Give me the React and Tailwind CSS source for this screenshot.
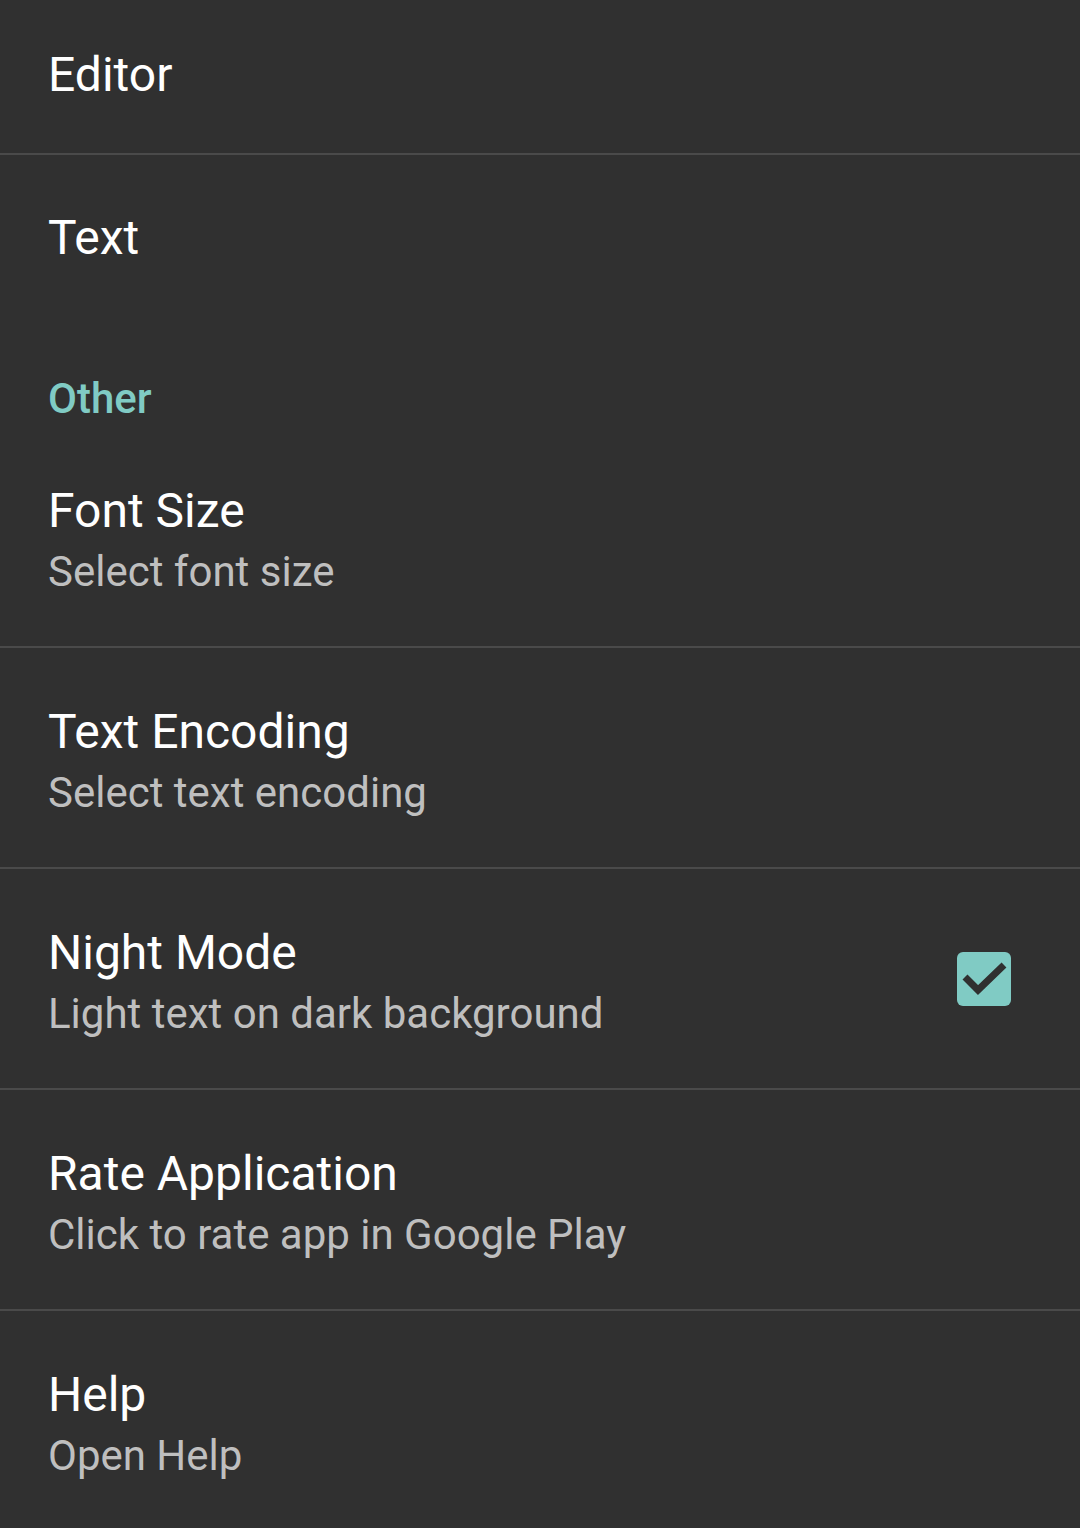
import React from 'react';

const font = { fontFamily: 'Roboto, "Noto Sans", sans-serif' };

function Divider() {
  return <div className="h-[2px] bg-[#4a4a4a]" />;
}

function PrefItem({ title, summary, checked }) {
  return (
    <div className="h-[219px] flex items-start pl-12 pr-[69px] pt-[56px]">
      <div className="flex-1 min-w-0">
        <div className="text-[48px] leading-[56px] text-white">{title}</div>
        <div className="mt-2 text-[42px] leading-[50px] text-[#bfbfbf]">{summary}</div>
      </div>
      {checked !== undefined ? (
        <div className="self-center -mt-[56px] w-[54px] h-[54px] rounded-[6px] bg-[#80cbc4] flex items-center justify-center">
          <svg width="54" height="54" viewBox="0 0 54 54">
            <path d="M8 25 L21 38 L47 13" fill="none" stroke="#303030" strokeWidth="7" />
          </svg>
        </div>
      ) : null}
    </div>
  );
}

export default function App() {
  return (
    <div className="w-[1080px] h-[1528px] overflow-hidden bg-[#303030]" style={font}>
      <div className="h-[153px] pl-12 pt-[47px] text-[48px] leading-[56px] text-white">Editor</div>
      <Divider />
      <div className="h-[168px] pl-12 pt-[55px] text-[48px] leading-[56px] text-white">Text</div>

      <div className="h-[104px] pl-12 pt-[51px] text-[42px] leading-[50px] font-medium text-[#80cbc4]">Other</div>

      <PrefItem title="Font Size" summary="Select font size" />
      <Divider />
      <PrefItem title="Text Encoding" summary="Select text encoding" />
      <Divider />
      <PrefItem title="Night Mode" summary="Light text on dark background" checked />
      <Divider />
      <PrefItem title="Rate Application" summary="Click to rate app in Google Play" />
      <Divider />
      <PrefItem title="Help" summary="Open Help" />
    </div>
  );
}
